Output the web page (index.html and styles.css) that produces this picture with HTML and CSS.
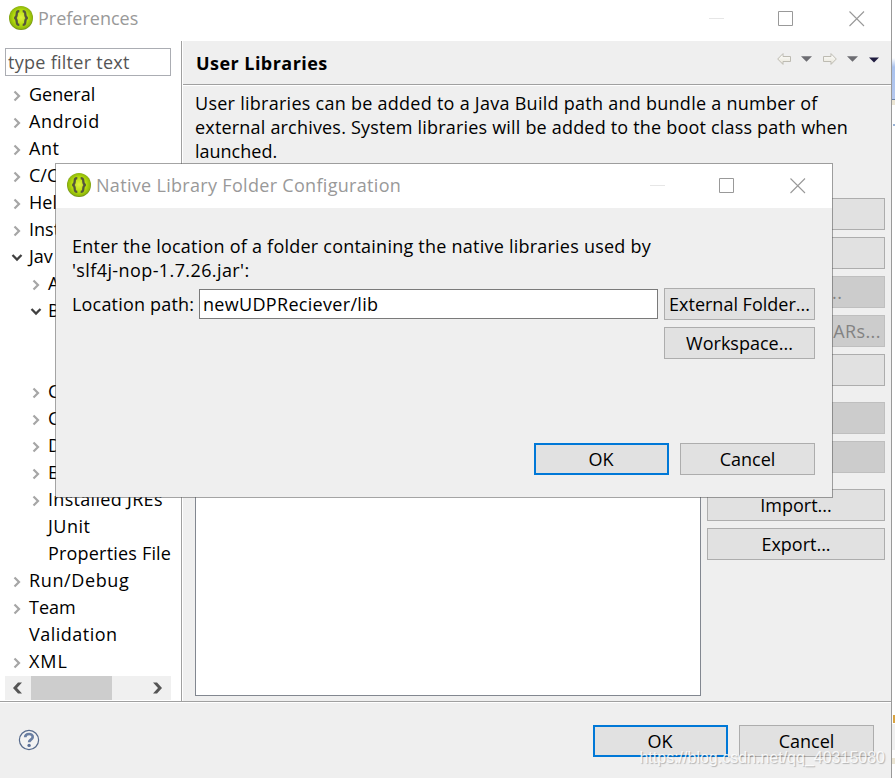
FILE: index.html
```html
<!DOCTYPE html>
<html lang="en">
<head>
<meta charset="utf-8">
<title>Preferences</title>
<link rel="stylesheet" href="styles.css">
</head>
<body>
<svg class="defs" aria-hidden="true">
  <defs>
    <radialGradient id="lime" cx="50%" cy="48%" r="52%">
      <stop offset="0" stop-color="#dff240"/><stop offset=".6" stop-color="#b4dc0c"/><stop offset=".88" stop-color="#92ba0c"/><stop offset="1" stop-color="#6c8a14"/>
    </radialGradient>
    <linearGradient id="cream" x1="0" y1="0" x2="0" y2="1"><stop offset="0" stop-color="#fff"/><stop offset="1" stop-color="#e6e3d6"/></linearGradient>
  </defs>
  <symbol id="app" viewBox="0 0 24 24"><circle cx="12" cy="12" r="12" fill="url(#lime)"/><g fill="none" stroke="#55563c" stroke-width="2.300"><path d="M10.300 5.200C7.900 5.200 7.700 6.300 7.700 8.300c0 2.300-.3 3.200-2.300 3.700 2 .5 2.300 1.400 2.300 3.700 0 2 .2 3.100 2.600 3.100"/><path d="M13.700 5.200c2.400 0 2.600 1.100 2.600 3.100 0 2.300.3 3.200 2.300 3.700-2 .5-2.300 1.400-2.300 3.700 0 2-.2 3.100-2.600 3.100"/></g></symbol>
  <symbol id="min" viewBox="0 0 16 16"><path d="M0 7.500h15" stroke="#e6e6e6" fill="none"/></symbol>
  <symbol id="max" viewBox="0 0 16 16"><path d="M.5.5h14v14H.5z" stroke="#999" fill="none"/></symbol>
  <symbol id="close" viewBox="0 0 16 16"><path d="M.5.5l14.500 14.500M15 .5L.5 15" stroke="#999" stroke-width="1.100" fill="none"/></symbol>
  <symbol id="right" viewBox="0 0 10 12"><path d="M2.500 1.500L7 6 2.500 10.500" stroke="#a6a6a6" stroke-width="2.200" fill="none"/></symbol>
  <symbol id="down" viewBox="0 0 12 10"><path d="M1.500 2L6 6.500 10.500 2" stroke="#404040" stroke-width="2.300" fill="none"/></symbol>
  <symbol id="back" viewBox="0 0 14 12"><path d="M.7 6L6 .6v2.900h7.500v5H6v2.900z" fill="url(#cream)" stroke="#bdbbb2"/></symbol>
  <symbol id="tri" viewBox="0 0 12 6"><path d="M0 0h12L6 6z"/></symbol>
</svg>

<div class="desktop">
<main class="window">
  <header class="titlebar">
    <svg class="app"><use href="#app"/></svg>
    <span class="title t-pref">Preferences</span>
    <span class="controls"><svg><use href="#min"/></svg><svg><use href="#max"/></svg><svg><use href="#close"/></svg></span>
  </header>
  <div class="body">
    <aside class="sidebar">
      <div class="filter"><span>type filter text</span></div>
      <ul class="tree">
        <li><svg class="r"><use href="#right"/></svg><span>General</span></li>
        <li><svg class="r"><use href="#right"/></svg><span class="w5">Android</span></li>
        <li><svg class="r"><use href="#right"/></svg><span class="w5">Ant</span></li>
        <li><svg class="r"><use href="#right"/></svg><span>C/C</span></li>
        <li><svg class="r"><use href="#right"/></svg><span>Hel</span></li>
        <li><svg class="r"><use href="#right"/></svg><span>Inst</span></li>
        <li><svg class="d"><use href="#down"/></svg><span>Jav</span></li>
        <li class="sub"><svg class="r"><use href="#right"/></svg><span>A</span></li>
        <li class="sub"><svg class="d"><use href="#down"/></svg><span>B</span></li>
        <li></li>
        <li></li>
        <li class="sub"><svg class="r"><use href="#right"/></svg><span>C</span></li>
        <li class="sub"><svg class="r"><use href="#right"/></svg><span>C</span></li>
        <li class="sub"><svg class="r"><use href="#right"/></svg><span>D</span></li>
        <li class="sub"><svg class="r"><use href="#right"/></svg><span>E</span></li>
        <li class="sub"><svg class="r"><use href="#right"/></svg><span class="w3">Installed JREs</span></li>
        <li class="sub"><i class="r"></i><span class="w5">JUnit</span></li>
        <li class="sub"><i class="r"></i><span class="w2">Properties File</span></li>
        <li><svg class="r"><use href="#right"/></svg><span class="w6">Run/Debug</span></li>
        <li><svg class="r"><use href="#right"/></svg><span>Team</span></li>
        <li><i class="r"></i><span class="w5">Validation</span></li>
        <li><svg class="r"><use href="#right"/></svg><span class="w9">XML</span></li>
      </ul>
      <div class="scroll">
        <svg viewBox="0 0 26 24"><path d="M8 12l5-5.500h4L12 12l5 5.500h-4z" fill="#555"/></svg>
        <div class="thumb"></div>
        <svg class="end" viewBox="0 0 26 24"><path d="M17 12l-5-5.500H8L13 12l-5 5.500h4z" fill="#555"/></svg>
      </div>
    </aside>
    <section class="page">
      <div class="pagehead">
        <h1>User Libraries</h1>
        <div class="nav">
          <svg class="arrow"><use href="#back"/></svg><svg class="tri"><use href="#tri"/></svg>
          <svg class="arrow flip"><use href="#back"/></svg><svg class="tri"><use href="#tri"/></svg>
          <svg class="tri menu"><use href="#tri"/></svg>
        </div>
      </div>
      <p class="intro"><span class="i1">User libraries can be added to a Java Build path and bundle a number of</span><br><span class="w2">external archives. System libraries will be added to the boot class path when</span><br><span>launched.</span></p>
      <div class="cols">
        <div class="list"></div>
        <div class="buttons">
          <div class="btn"></div>
          <div class="btn"></div>
          <div class="btn off w4">Add JARs...</div>
          <div class="btn off w4">Add External JARs...</div>
          <div class="btn"></div>
          <div class="btn off gap"></div>
          <div class="btn off"></div>
          <div class="btn gap">Import...</div>
          <div class="btn">Export...</div>
        </div>
      </div>
    </section>
  </div>
  <footer class="footer">
    <svg class="help" viewBox="0 0 22 22"><circle cx="11" cy="11" r="9.600" fill="#f3f3f3" stroke="#566a8c" stroke-width="1.200"/><path d="M7.200 8.300C7.300 3.900 15 4 14.700 8.100c-.1 2.500-3.600 2.500-3.600 5.200" fill="none" stroke="#6a7fa3" stroke-width="2.700"/><circle cx="11.100" cy="16.400" r="1.700" fill="#5b7097"/></svg>
    <div class="btn primary">OK</div>
    <div class="btn">Cancel</div>
  </footer>
</main>
<div class="behind"><i class="blue"></i><i class="cream"></i><i class="dot"></i><i class="mark"></i><i class="pale"></i><i class="cream low"></i></div>
</div>

<div class="dialog">
  <header class="titlebar">
    <svg class="app"><use href="#app"/></svg>
    <span class="title w3">Native Library Folder Configuration</span>
    <span class="controls"><svg><use href="#min"/></svg><svg><use href="#max"/></svg><svg><use href="#close"/></svg></span>
  </header>
  <div class="dbody">
    <p class="msg"><span class="m1">Enter the location of a folder containing the native libraries used by</span><br><span class="w4">'slf4j-nop-1.7.26.jar':</span></p>
    <div class="row">
      <span class="label w2">Location path:</span>
      <div class="field"><span class="w3">newUDPReciever/lib</span></div>
      <div class="stack"><div class="btn ext">External Folder...</div><div class="btn">Workspace...</div></div>
    </div>
    <div class="actions"><div class="btn primary">OK</div><div class="btn">Cancel</div></div>
  </div>
</div>
<div class="watermark">https://blog.csdn.net/qq_40315080</div>
</body>
</html>
```
FILE: styles.css
```css
* { box-sizing: border-box; }
body { margin: 0; width: 895px; height: 778px; overflow: hidden; position: relative; background: #fff; color: #000; font: 18px/24px "Open Sans", "Noto Sans", sans-serif; }
p, h1, ul { margin: 0; padding: 0; }
span { white-space: nowrap; }
svg { display: block; flex: none; }
.defs { position: absolute; width: 0; height: 0; }
.desktop { display: flex; height: 778px; }
.window { width: 892px; height: 778px; border-right: 1px solid #999; display: flex; flex-direction: column; background: #efefef; }

.w2 { letter-spacing: .19px; }
.w3 { letter-spacing: .31px; }
.w4 { letter-spacing: .4px; }
.w5 { letter-spacing: .5px; }
.w6 { letter-spacing: .62px; }
.w9 { letter-spacing: .9px; }
.i1 { letter-spacing: .265px; }
.m1 { letter-spacing: .23px; }

.titlebar { display: flex; align-items: flex-start; background: #fff; color: #999; }
.window > .titlebar { height: 41px; padding: 6px 0 0 9px; }
.app { width: 24px; height: 24px; }
.title { margin-left: 5px; }
.controls { display: flex; gap: 54px; margin-left: auto; padding-top: 5px; }
.controls svg { width: 16px; height: 16px; }
.controls svg:nth-child(2) { margin: 0 1px 0 -1px; }
.window .controls { margin-right: 26px; }

.body { display: flex; height: 660px; }
.sidebar { width: 182px; background: #fff; border-right: 1px solid #a0a0a0; padding: 7px 10px 0 5px; }
.filter { height: 28px; border: 1px solid #abadb3; padding: 1px 0 0 2px; color: #555; letter-spacing: .28px; }
.tree { list-style: none; margin-top: 4px; }
.tree li { height: 27px; display: flex; align-items: center; padding-left: 7px; }
.tree .sub { padding-left: 26px; }
.tree .r { width: 10px; height: 12px; margin: 5px 7px 0 0; flex: none; }
.tree .d { width: 12px; height: 10px; margin: 4px 6px 0 -1px; }
.scroll { display: flex; height: 24px; margin-top: 2px; background: #f0f0f0; }
.scroll svg { width: 26px; height: 24px; }
.scroll .end { margin-left: auto; }
.thumb { width: 81px; background: #cdcdcd; }

.page { flex: 1; border-left: 1px solid #fff; }
.pagehead { height: 45px; border-bottom: 1px solid #fff; box-shadow: inset 0 -1px #a0a0a0; display: flex; padding: 10px 12px 0 13px; }
h1 { font-size: 18px; line-height: 24px; font-weight: 700; letter-spacing: .45px; }
.nav { display: flex; margin-left: auto; padding-top: 2px; }
.arrow { width: 14px; height: 12px; }
.tri { width: 11px; height: 6px; margin: 3px 11px 0 10px; fill: #6d6d72; }
.flip { transform: scaleX(-1); }
.tri.menu { width: 10px; margin: 4px 0 0; fill: #211d40; }
.intro { padding: 5px 0 0 12px; }
.cols { display: flex; margin: 35px 0 0 12px; gap: 6px; }
.list { width: 506px; height: 498px; background: #fff; border: 1px solid #828790; }
.buttons { width: 178px; display: flex; flex-direction: column; gap: 7px; }
.btn { height: 32px; border: 1px solid #adadad; background: #e1e1e1; text-align: center; line-height: 30px; white-space: nowrap; }
.btn.off { background: #ccc; border-color: #bfbfbf; color: #838383; }
.btn.gap { margin-top: 9px; }
.btn.primary { border: 2px solid #0078d7; line-height: 28px; padding-right: 1px; }

.footer { height: 77px; border-top: 1px solid #a0a0a0; box-shadow: inset 0 1px #fff; display: flex; padding: 23px 17px 0 18px; }
.footer .help { width: 22px; height: 22px; margin: 4px auto 0 0; }
.footer .btn { width: 135px; margin-left: 11px; }

.behind { width: 3px; display: flex; flex-direction: column; }
.blue { height: 42px; margin-top: 58px; background: linear-gradient(#fff, #a9c2ee 22%, #b5c8ef); border-bottom: 1px solid #6b84a8; }
.cream { height: 5px; background: #ece6d4; }
.dot { height: 2px; width: 2px; margin: 19px 0 0 1px; background: #9ab4d8; }
.mark { height: 8px; margin-top: 589px; background: linear-gradient(90deg, #fff 33%, #d9a441 33%); }
.pale { height: 26px; margin-top: 1px; background: #f0f0f0; }
.low { margin-top: 8px; height: 6px; }

.dialog { position: absolute; left: 55px; top: 163px; width: 778px; height: 335px; border: 1px solid rgba(90,90,90,.55); background: #efefef; background-clip: padding-box; }
.dialog .titlebar { height: 44px; padding: 9px 26px 0 11px; }
.dbody { padding: 26px 17px 0 16px; }
.row { display: flex; margin-top: 6px; }
.label { width: 127px; padding-top: 4px; }
.field { width: 459px; height: 30px; margin-top: 1px; padding: 2px 0 0 3px; border: 1px solid #7a7a7a; background: #fff; }
.stack { width: 151px; margin-left: 6px; display: flex; flex-direction: column; gap: 7px; }
.actions { display: flex; justify-content: flex-end; gap: 11px; margin-top: 84px; }
.actions .btn { width: 135px; }
.watermark { position: absolute; right: 10px; top: 748px; font: 16px/20px "Liberation Sans", Arial, sans-serif; color: rgba(255,255,255,.85); text-shadow: 1px 1px 1px rgba(0,0,0,.25); }
```
